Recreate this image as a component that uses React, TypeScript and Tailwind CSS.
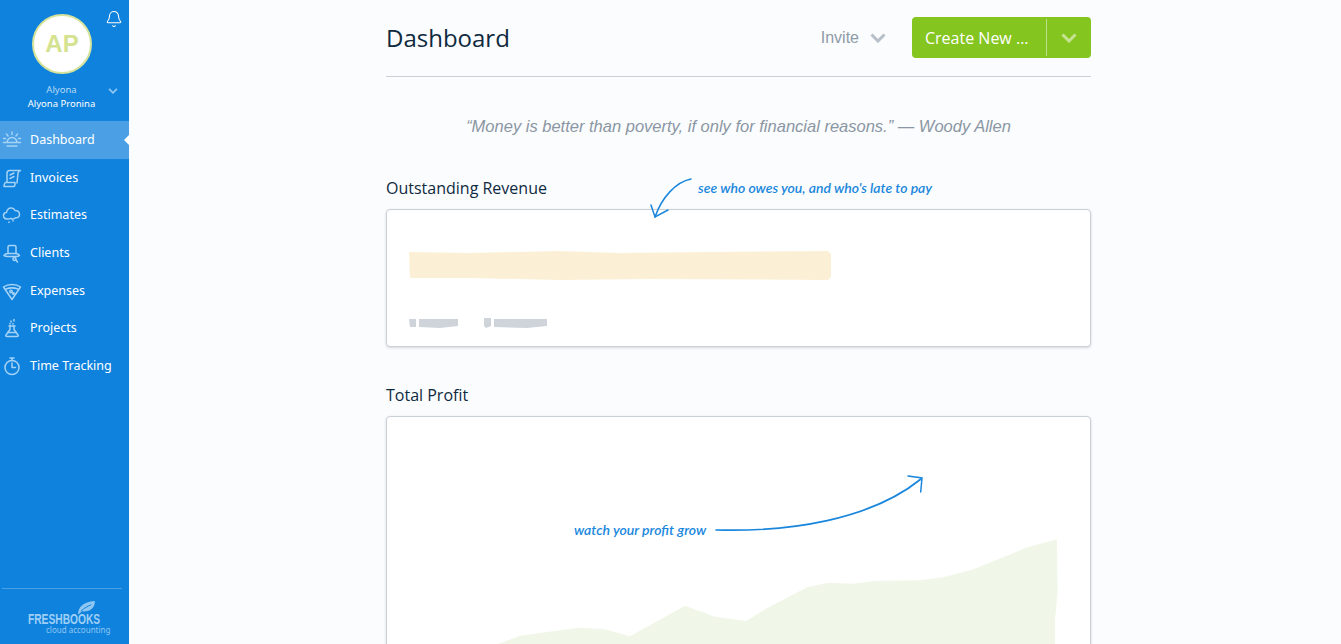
import { Bell } from 'lucide-react';
import type { ReactNode } from 'react';

function Chevron({ className }: { className: string }) {
  return (
    <svg viewBox="0 0 16 10" className={className} fill="none" stroke="currentColor" strokeWidth="3">
      <path d="M1.500 1.500 8 8l6.500-6.500" />
    </svg>
  );
}

function NavIcon({ children }: { children: ReactNode }) {
  return (
    <svg viewBox="0 0 20 20" className="w-5 h-5 shrink-0 text-[#a5d3f6]" fill="none" stroke="currentColor" strokeWidth="1.500" strokeLinecap="round" strokeLinejoin="round">
      {children}
    </svg>
  );
}

const navItems: { label: string; active?: boolean; icon: ReactNode }[] = [
  {
    label: 'Dashboard',
    active: true,
    icon: (
      <>
        <path d="M5 12.500a5 5 0 0 1 10 0M1.500 12.500h17M5 16h10" />
        <path d="M10 2v2.500M4.500 4l1.600 2M15.500 4l-1.600 2M1.500 8.500h2M16.500 8.500h2" />
      </>
    ),
  },
  {
    label: 'Invoices',
    icon: (
      <>
        <path d="M5 14V5.500C5 4 6 2.500 7.500 2.500H18.500c-1.500 0-2 1-2.500 2.500L15 15" />
        <path d="M2 18.500h9.500c1 0 1.500-1 1.500-2.500v-1.500H3.500C3 14.500 2 16.500 2 18.500Z" />
        <path d="M8 7l4-2M8 10.500l4-2" />
      </>
    ),
  },
  {
    label: 'Estimates',
    icon: (
      <>
        <path d="M5.500 14C3 14 1.500 12.500 1.500 10.500c0-2 1.500-3 3-3C5 4.500 7 2.500 9.500 3c2 .2 3 1.500 3.500 2.500 2.500 0 4.500 1.500 4.500 4 0 2-1.500 3.500-4 3.300-1 1-3 1.500-4.500.5-1 .5-2 .9-3.500.7Z" />
        <path d="M7 17v.5M11 15.500v.5" />
      </>
    ),
  },
  {
    label: 'Clients',
    icon: (
      <>
        <path d="M6 10.500V4c0-1 .5-1.500 1.500-1.500h5c1 0 1.500.5 1.500 1.500v6.500" />
        <path d="M2 12.500c1-1.500 2-2 4-2h8c1.500 0 2.500.5 3.500 2-1 1-2 1-3.500 1H6c-2 0-3 0-4-1Z" />
        <circle cx="12.500" cy="16" r="1.500" />
        <path d="M14 17l1.500 2" />
      </>
    ),
  },
  {
    label: 'Expenses',
    icon: (
      <>
        <path d="M1.500 6C6 2.500 14 2.500 18.500 6L10 18.500 1.500 6Z" />
        <path d="M4 8c4-1.500 8-1.500 12 0" />
        <circle cx="9" cy="10.500" r="1.200" />
        <circle cx="11.500" cy="12.500" r=".8" />
      </>
    ),
  },
  {
    label: 'Projects',
    icon: (
      <>
        <path d="M8 8v3.500L4 17c-.5 1 0 1.500 1 1.500h10c1 0 1.500-.5 1-1.500l-4-5.500V8" />
        <path d="M7 8h6M6 14.500h8" />
        <path d="M9 3v1M12 1.500v1.500M11 5.500v.5M8 5.500v.5" />
      </>
    ),
  },
  {
    label: 'Time Tracking',
    icon: (
      <>
        <circle cx="10" cy="11.500" r="7" />
        <path d="M10 7v4.500h3.500M8 2h4M10 2v2.500" />
      </>
    ),
  },
];

export default function App() {
  return (
    <div className="flex h-[644px] overflow-hidden bg-[#fbfcfe] font-['Open_Sans','Noto_Sans',sans-serif]">
      {/* SIDEBAR */}
      <aside className="w-[129px] shrink-0 flex flex-col bg-[#0f82dd] font-['Noto_Sans',sans-serif]">
        <div className="relative h-[121px] pt-[14px]">
          <div className="w-[60px] h-[60px] ml-[32px] rounded-full bg-white border-2 border-[#d6e39a] flex items-center justify-center text-[24px] font-bold text-[#d5e28f] font-['Liberation_Sans',sans-serif]">
            AP
          </div>
          <Bell className="absolute left-[105px] top-[10px] w-[18px] h-[18px] text-white" strokeWidth={1.4} />
          <Chevron className="absolute left-[108px] top-[88px] w-[10px] h-[6px] text-[#8fc6f2]" />
          <p className="mt-[9px] w-[123px] text-center text-[9.500px] leading-[14px] text-[#b5daf7]">Alyona</p>
          <p className="w-[123px] text-center text-[9.500px] leading-[14px] text-white">Alyona Pronina</p>
        </div>

        <nav className="flex flex-col">
          {navItems.map((item) => (
            <div
              key={item.label}
              className={`relative h-[37.700px] flex items-center gap-[8px] pl-[2px] text-[12.500px] text-white ${item.active ? 'bg-[#4a9fe5]' : ''}`}
            >
              <NavIcon>{item.icon}</NavIcon>
              <span className="pt-px">{item.label}</span>
              {item.active && (
                <span className="absolute right-0 top-[14px] border-y-[5px] border-r-[5px] border-y-transparent border-r-white" />
              )}
            </div>
          ))}
        </nav>

        <div className="mt-auto mx-[2px] w-[120px] h-[56px] border-t border-[#4a9fe5] relative">
          <svg viewBox="0 0 20 16" className="absolute left-[75px] top-[11px] w-[19px] h-[15px] text-[#8fc6f2]" fill="currentColor">
            <path d="M1 15C1 8 6 2 19 1c0 8-6 12-14 11-1 1-2 2-3 3Z" />
            <path d="M4 12C8 8 11 7 15 5" fill="none" stroke="#0f82dd" strokeWidth="1" />
          </svg>
          <p className="absolute left-[26px] top-[21px] text-[14px] leading-[18px] font-bold text-[#9fcff5] font-['Liberation_Sans',sans-serif] scale-x-[0.73] origin-left whitespace-nowrap">
            FRESHBOOKS
          </p>
          <p className="absolute left-[44px] top-[36px] text-[8px] leading-[10px] text-[#8fc6f2] whitespace-nowrap">cloud accounting</p>
        </div>
      </aside>

      {/* MAIN */}
      <main className="ml-[257px] w-[705px] shrink-0">
        <header className="h-[77px] pt-[17px] border-b border-[#ccd0d6]">
          <div className="flex items-center h-[41px]">
            <h1 className="text-[24px] text-[#0f2a3f] font-normal">Dashboard</h1>
            <div className="ml-auto flex items-center gap-[11px] text-[16px] text-[#8e9ba8] font-['Liberation_Sans',sans-serif]">
              Invite
              <Chevron className="w-[16px] h-[10px] text-[#b7c0c9]" />
            </div>
            <div className="ml-[26px] w-[179px] h-[41px] flex items-center rounded-[4px] bg-[#85c51f] text-white">
              <span className="w-[134px] pl-[13px] text-[16px] whitespace-nowrap">Create New ...</span>
              <span className="w-px h-[37px] bg-[#bfe08a]" />
              <span className="flex-1 flex justify-center">
                <Chevron className="w-[16px] h-[10px] text-[#c5e393]" />
              </span>
            </div>
          </div>
        </header>

        <p className="mt-[37px] text-center text-[16.500px] leading-[24px] italic text-[#8a96a3] font-['Liberation_Sans',sans-serif]">
          “Money is better than poverty, if only for financial reasons.” — Woody Allen
        </p>

        {/* OUTSTANDING REVENUE */}
        <section className="relative mt-[38px]">
          <h2 className="text-[16px] leading-[24px] text-[#0f2a3f]">Outstanding Revenue</h2>
          <div className="mt-[9px] h-[138px] rounded-[4px] border border-[#c9d0d8] bg-white shadow-[0_1px_3px_rgba(0,0,0,0.15)] pl-[22px] pt-[41px]">
            <svg viewBox="0 0 423 29" className="block w-[422px] h-[29px] text-[#fbf0d5]" fill="currentColor">
              <path d="M0 1 60 2 150 0 210 2 300 1 420 0 423 3V26L420 29 240 28 150 29 60 27 1 27Z" />
            </svg>
            <svg viewBox="0 0 140 10" className="block mt-[38px] w-[140px] h-[10px] text-[#ced4da]" fill="currentColor">
              <path d="M0 1h7v8H1ZM10 1h39v7l-18 2-21-1ZM75 0h7v8l-5 2-2-2ZM85 1h20l33 0v7l-20 2-33-1Z" />
            </svg>
          </div>
          <svg viewBox="640 180 60 50" className="absolute left-[254px] top-[-3px] w-[60px] h-[50px] text-[#1a87dd]" fill="none" stroke="currentColor" strokeWidth="1.500" strokeLinecap="round">
            <path d="M691 186C676 189 662 204 655 224" />
            <path d="M651 212 655 224 668 217" />
          </svg>
          <p className="absolute left-[312px] top-0 text-[14px] leading-[24px] font-semibold italic text-[#1a87dd] font-['Lato',sans-serif] whitespace-nowrap">
            see who owes you, and who's late to pay
          </p>
        </section>

        {/* TOTAL PROFIT */}
        <section className="mt-[36px]">
          <h2 className="text-[16px] leading-[24px] text-[#0f2a3f]">Total Profit</h2>
          <div className="relative mt-[9px] h-[300px] rounded-[4px] border border-[#c9d0d8] bg-white shadow-[0_1px_3px_rgba(0,0,0,0.15)]">
            <svg viewBox="387 417 703 298" className="absolute left-0 top-0 w-[703px] h-[298px]">
              <path
                d="M498 644 520 635.700 578 627.700 604 629 630 636.300 685 605.700 715 616.700 746 621 765 609.300 807 587.300 828.500 582.700 852 583.700 876 580.700 920 580.300 943 577.300 972 569.700 1029 546.700 1057 539.300 1057.600 593 1055 620V715H498Z"
                fill="#f1f7e8"
              />
              <path d="M716 530C790 532 870 520 921 479" fill="none" stroke="#1a87dd" strokeWidth="1.700" strokeLinecap="round" />
              <path d="M908 476 922 478 920.700 492" fill="none" stroke="#1a87dd" strokeWidth="1.500" strokeLinecap="round" />
            </svg>
            <p className="absolute left-[187px] top-[101px] text-[14px] leading-[24px] font-semibold italic text-[#1a87dd] font-['Lato',sans-serif] whitespace-nowrap">
              watch your profit grow
            </p>
          </div>
        </section>
      </main>
    </div>
  );
}
